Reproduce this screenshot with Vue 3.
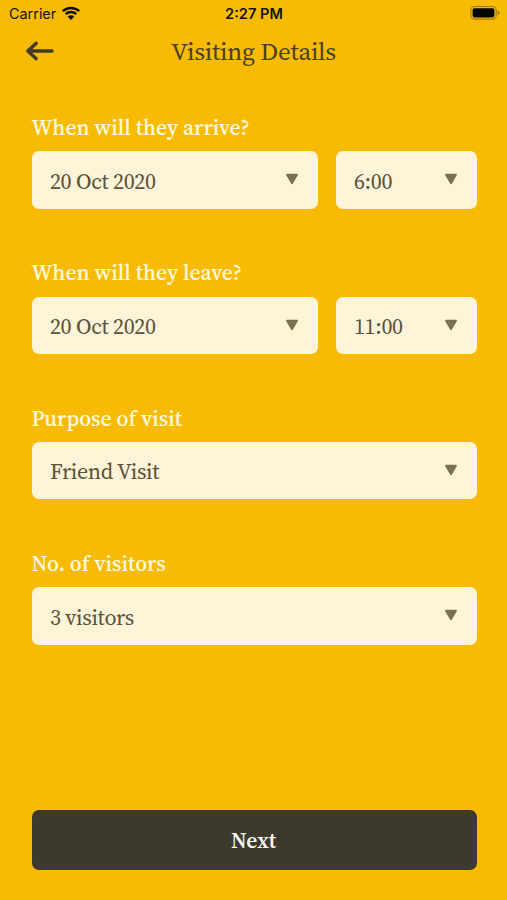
<script setup>
const groups = [
  { label: 'When will they arrive?', key: 'arrive', fields: [{ text: '20 Oct 2020', kind: 'date' }, { text: '6:00', kind: 'time' }] },
  { label: 'When will they leave?', key: 'leave', fields: [{ text: '20 Oct 2020', kind: 'date' }, { text: '11:00', kind: 'time' }] },
  { label: 'Purpose of visit', key: 'purpose', fields: [{ text: 'Friend Visit', kind: 'wide' }] },
  { label: 'No. of visitors', key: 'visitors', fields: [{ text: '3 visitors', kind: 'wide' }] },
]
</script>

<template>
  <main class="screen">
    <div class="status">
      <div class="carrier">
        <span>Carrier</span>
        <svg class="wifi" width="20" height="15" viewBox="0 0 20 15">
          <path d="M1.8 5.1C6.4.8 13.6.8 18.2 5.1M4.7 8.2c3-2.8 7.6-2.8 10.6 0" fill="none" stroke="#100e04" stroke-width="2.5" />
          <path d="M6.6 10.6c1.9-1.7 4.9-1.7 6.8 0L10 13.9z" fill="#100e04" />
        </svg>
      </div>
      <span class="clock">2:27 PM</span>
      <svg class="battery" width="32" height="16" viewBox="0 0 32 16">
        <rect x="1.9" y="1.5" width="25.3" height="12.6" rx="3.6" fill="none" stroke="#a07a06" stroke-width="1.1" />
        <rect x="3.6" y="3.2" width="21.8" height="9.2" rx="1.8" fill="#050400" />
        <path d="M28.7 5.3c2.3.8 2.3 4.2 0 5z" fill="#a07a06" />
      </svg>
    </div>
    <header class="header">
      <svg class="back" width="30" height="22" viewBox="0 0 30 22">
        <path d="M11.2 3.3 2.8 11l8.4 7.7M3 11h24" fill="none" stroke="#3f3b26" stroke-width="3.4" stroke-linecap="round" stroke-linejoin="round" />
      </svg>
      <h1>Visiting Details</h1>
    </header>
    <form class="form">
      <section v-for="g in groups" :key="g.key" class="group">
        <label>{{ g.label }}</label>
        <div class="row">
          <div v-for="f in g.fields" :key="f.text" class="field" :class="f.kind">
            <span>{{ f.text }}</span>
            <svg width="14" height="12" viewBox="0 0 14 12">
              <path d="M2 1.7h10L7 10.2z" fill="#7b704f" stroke="#7b704f" stroke-width="1.8" stroke-linejoin="round" />
            </svg>
          </div>
        </div>
      </section>
    </form>
    <button class="next" type="button">Next</button>
  </main>
</template>

<style>
body { background: #f9bb02; }
</style>

<style scoped>
.screen {
  box-sizing: border-box;
  width: 507px;
  height: 900px;
  padding-bottom: 30.5px;
  display: flex;
  flex-direction: column;
  overflow: hidden;
  background: #f9bb02;
  font-family: "Source Serif 4", "Source Serif Pro", "Noto Serif CJK SC", "Liberation Serif", serif;
}
.status {
  height: 27px;
  padding: 0 6px 0 9px;
  display: grid;
  grid-template-columns: 1fr auto 1fr;
  align-items: center;
  font-family: Inter, sans-serif;
  font-size: 14.4px;
  color: #171303;
}
.carrier { display: flex; align-items: center; gap: 4.5px; }
.wifi { margin-top: -1px; }
.clock { font-size: 14.6px; font-weight: 600; margin-left: -2px; }
.battery { justify-self: end; margin-top: -1px; }
.header {
  height: 48px;
  padding: 0 25px;
  display: grid;
  grid-template-columns: 1fr auto 1fr;
  align-items: center;
}
h1 {
  margin: 0;
  font-size: 25.2px;
  line-height: 32px;
  font-weight: 400;
  letter-spacing: -.3px;
  color: #4a4221;
}
.form {
  padding: 38px 30.5px 0 31.5px;
  display: flex;
  flex-direction: column;
}
.group { height: 145.35px; }
label {
  display: block;
  height: 38.3px;
  line-height: 29px;
  font-size: 21.6px;
  font-weight: 500;
  color: #fff8dc;
  -webkit-text-stroke: .12px #fff8dc;
}
.row { display: flex; gap: 18px; }
.field {
  box-sizing: border-box;
  height: 57.5px;
  flex: 1;
  padding: 3px 18.5px 2px;
  display: flex;
  align-items: center;
  justify-content: space-between;
  border-radius: 7px;
  background: #fff3d8;
  font-size: 22px;
  letter-spacing: -.38px;
  color: #5a523a;
}
.field.date { flex: 0 0 286px; }
.field svg { margin-top: -2.5px; }
.next {
  height: 59.5px;
  margin: auto 30.5px 0 31.5px;
  padding: 1px 1px 0 0;
  border: 0;
  border-radius: 7px;
  background: #3d392d;
  color: #fbf8f0;
  font-family: inherit;
  font-size: 21.5px;
  font-weight: 600;
}
</style>
